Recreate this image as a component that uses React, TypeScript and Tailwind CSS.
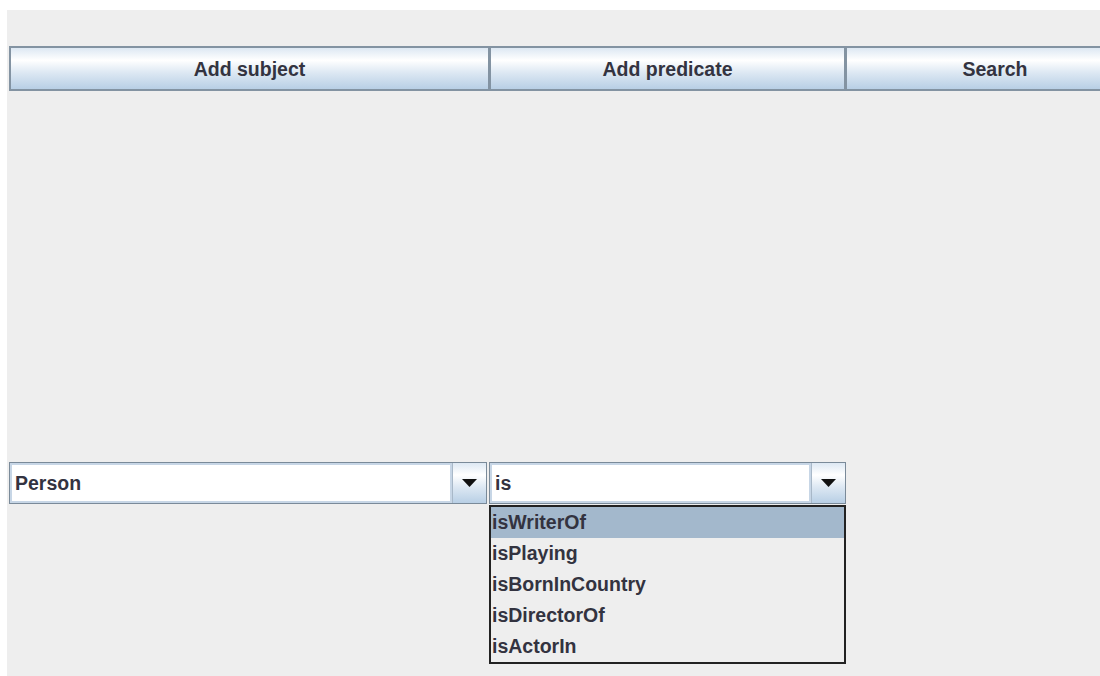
import React from "react";

const font = { fontFamily: '"Liberation Sans", Arial, sans-serif' };

const btnBg =
  "bg-[linear-gradient(to_bottom,#dde8f3_0%,#ffffff_30%,#dde8f3_60%,#b8cfe5_100%)]";

function ToolButton({ label, className }: { label: string; className: string }) {
  return (
    <button
      className={`${className} ${btnBg} h-[45px] shrink-0 border-2 border-[#8393a2] pt-[3px] text-[19.5px] font-bold text-[#333340] flex items-center justify-center`}
    >
      {label}
    </button>
  );
}

function Arrow() {
  return (
    <div
      className={`${btnBg} w-[34px] h-full border-l border-[#a8b8c8] flex items-center justify-center`}
    >
      <svg width="15" height="8" viewBox="0 0 15 8">
        <path d="M0 0 H15 L7.5 8 Z" fill="#111" />
      </svg>
    </div>
  );
}

function Combo({
  value,
  width,
  children,
}: {
  value: string;
  width: string;
  children?: React.ReactNode;
}) {
  return (
    <div className={`relative ${width} h-[42px] shrink-0`}>
      <div className="h-full flex border border-[#7a8a99] bg-white">
        <div className="flex-1 flex items-center pl-[3px] pt-[2px] border-2 border-[#c7d6e6] text-[19.5px] font-bold text-[#333340]">
          {value}
        </div>
        <Arrow />
      </div>
      {children}
    </div>
  );
}

const options = ["isWriterOf", "isPlaying", "isBornInCountry", "isDirectorOf", "isActorIn"];

export default function App() {
  return (
    <div className="w-[1100px] h-[676px] overflow-hidden bg-white pl-[7px] pt-[10px]" style={font}>
      <div className="h-[666px] bg-[#eeeeee] pl-[2px] pt-[36px] flex flex-col">
        <div className="flex">
          <ToolButton label="Add subject" className="w-[481px]" />
          <ToolButton label="Add predicate" className="w-[357px] -ml-[1px]" />
          <ToolButton label="Search" className="w-[300px] -ml-[1px]" />
        </div>

        <div className="flex gap-[2px] mt-[371px]">
          <Combo value="Person" width="w-[478px]" />
          <Combo value="is" width="w-[357px]">
            <div className="absolute left-0 top-[43px] w-[357px] border-2 border-[#222] bg-[#eeeeee]">
              {options.map((o, i) => (
                <div
                  key={o}
                  className={`h-[31px] flex items-center pl-[1px] pt-[1px] text-[19.5px] font-bold text-[#333340] ${
                    i === 0 ? "bg-[#a3b8cc]" : ""
                  }`}
                >
                  {o}
                </div>
              ))}
            </div>
          </Combo>
        </div>
      </div>
    </div>
  );
}
